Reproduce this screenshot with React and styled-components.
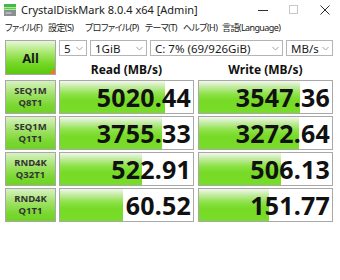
import React from 'react'
import styled, { createGlobalStyle } from 'styled-components'

const GlobalStyle = createGlobalStyle`
    html, body {
        margin: 0;
        padding: 0;
        background: #ffffff;
    }
    body {
        font-family: "Noto Sans", "Noto Sans CJK JP", sans-serif;
        color: #1a1a1a;
    }
`

const Window = styled.div`
    width: 340px;
    height: 280px;
    background: #ffffff;
    overflow: hidden;
`

const TitleBar = styled.div`
    height: 19px;
    display: flex;
    align-items: center;
    padding-left: 4px;
    font-size: 11px;
    color: #202020;
`

const TitleText = styled.span`
    margin-left: 5px;
    flex: 1;
    white-space: nowrap;
`

const WinButton = styled.div`
    width: 31px;
    height: 19px;
    display: flex;
    align-items: center;
    justify-content: center;
`

const MenuBar = styled.div`
    height: 16px;
    display: flex;
    align-items: center;
    padding-left: 5px;
    font-size: 9px;
    color: #1a1a1a;
    white-space: nowrap;
    font-family: "Noto Sans", "Noto Sans CJK JP", sans-serif;
    font-feature-settings: "palt" 1;
`

const MenuItem = styled.span`
    width: ${(p) => p.w}px;
    flex-shrink: 0;
    white-space: nowrap;
    letter-spacing: -0.6px;
`

const Board = styled.div`
    display: grid;
    grid-template-columns: 51px 135px 136px;
    grid-template-rows: 16px 20px repeat(4, 34px);
    column-gap: 3px;
    row-gap: 2px;
    padding: 5px 0 0 5px;
`

const AllButton = styled.div`
    grid-row: 1 / span 2;
    position: relative;
    border: 1px solid #a8a8a8;
    background: linear-gradient(to bottom, #e6f6d8 0%, #a8e86e 35%, #72d622 70%, #5cc810 100%);
    display: flex;
    align-items: center;
    justify-content: center;
    font-weight: 700;
    font-size: 13px;
    color: #1a1a1a;
    height: 33px;
`

const Corner = styled.div`
    position: absolute;
    right: 0;
    bottom: 0;
    width: 0;
    height: 0;
    border-left: 6px solid transparent;
    border-bottom: 6px solid #ee7a1c;
`

const Controls = styled.div`
    grid-column: 2 / span 2;
    display: flex;
    gap: 3px;
`

const Select = styled.div`
    width: ${(p) => p.w}px;
    height: 16px;
    box-sizing: border-box;
    border: 1px solid #b4b4b4;
    background: #ffffff;
    display: flex;
    align-items: center;
    justify-content: space-between;
    padding: 0 3px 0 4px;
    font-size: 11.5px;
    color: #1a1a1a;
    white-space: nowrap;
    overflow: hidden;
`

const Chevron = styled.svg`
    width: 7px;
    height: 5px;
    flex-shrink: 0;
`

const Header = styled.div`
    display: flex;
    align-items: center;
    justify-content: center;
    font-weight: 700;
    font-size: 12px;
    color: #111;
    padding-top: 3px;
    margin-left: ${(p) => (p.write ? '1px' : '0')};
`

const Label = styled.div`
    border: 1px solid #a8a8a8;
    box-sizing: border-box;
    background: linear-gradient(to bottom, #d8f2c2 0%, #a2e26a 40%, #7ad832 75%, #70d224 100%);
    display: flex;
    flex-direction: column;
    align-items: center;
    justify-content: center;
    font-weight: 700;
    font-size: 9.5px;
    line-height: 12px;
    color: #333;
`

const Cell = styled.div`
    position: relative;
    border: 1px solid #a8a8a8;
    box-sizing: border-box;
    background: #ffffff;
    margin-left: ${(p) => (p.write ? '1px' : '0')};
    display: flex;
    align-items: center;
    justify-content: flex-end;
    overflow: hidden;
`

const Bar = styled.div`
    position: absolute;
    left: 0;
    top: 0;
    bottom: 0;
    background: linear-gradient(to bottom, #f2f8ee 0%, #c4eca2 18%, #8ee24a 40%, #76da26 60%, #78dc2a 100%);
`

const Value = styled.span`
    position: relative;
    font-weight: 700;
    font-size: 25px;
    letter-spacing: 0.2px;
    color: #111;
    padding-right: 2px;
    line-height: 1;
`

const rows = [
    { a: 'SEQ1M', b: 'Q8T1', read: '5020.44', rp: 79, write: '3547.36', wp: 76 },
    { a: 'SEQ1M', b: 'Q1T1', read: '3755.33', rp: 77, write: '3272.64', wp: 75 },
    { a: 'RND4K', b: 'Q32T1', read: '522.91', rp: 62, write: '506.13', wp: 62 },
    { a: 'RND4K', b: 'Q1T1', read: '60.52', rp: 47, write: '151.77', wp: 53 },
]

const menus = [
    ['ファイル(F)', 43],
    ['設定(S)', 37],
    ['プロファイル(P)', 60],
    ['テーマ(T)', 38],
    ['ヘルプ(H)', 39],
    ['言語(Language)', 70],
]

const ChevronIcon = () => (
    <Chevron viewBox="0 0 7 5">
        <path d="M0.5 1 L3.5 4 L6.5 1" fill="none" stroke="#9a9a9a" strokeWidth="0.9" />
    </Chevron>
)

const AppIcon = () => (
    <svg width="12" height="12" viewBox="0 0 12 12">
        <rect x="0" y="0" width="12" height="3" fill="#3fb950" />
        <rect x="0" y="3.5" width="12" height="2" fill="#5ccf3a" />
        <rect x="0" y="6" width="12" height="6" fill="#8a8f96" />
        <rect x="1.5" y="8.5" width="6" height="1" fill="#e0e0e0" />
    </svg>
)

export default function App() {
    return (
        <Window>
            <GlobalStyle />
            <TitleBar>
                <AppIcon />
                <TitleText>CrystalDiskMark 8.0.4 x64 [Admin]</TitleText>
                <WinButton>
                    <svg width="10" height="10" viewBox="0 0 10 10">
                        <path d="M0 5.5 H10" stroke="#303030" strokeWidth="1" />
                    </svg>
                </WinButton>
                <WinButton>
                    <svg width="9" height="9" viewBox="0 0 9 9">
                        <rect x="0.5" y="0.5" width="8" height="8" fill="none" stroke="#c8c8c8" strokeWidth="1" />
                    </svg>
                </WinButton>
                <WinButton>
                    <svg width="10" height="10" viewBox="0 0 10 10">
                        <path d="M0.5 0.5 L9.5 9.5 M9.5 0.5 L0.5 9.5" stroke="#303030" strokeWidth="1" />
                    </svg>
                </WinButton>
            </TitleBar>
            <MenuBar>
                {menus.map(([t, w]) => (
                    <MenuItem key={t} w={w}>{t}</MenuItem>
                ))}
            </MenuBar>
            <Board>
                <AllButton>
                    All
                    <Corner />
                </AllButton>
                <Controls>
                    <Select w={28}>5<ChevronIcon /></Select>
                    <Select w={57}>1GiB<ChevronIcon /></Select>
                    <Select w={133}>C: 7% (69/926GiB)<ChevronIcon /></Select>
                    <Select w={47}>MB/s<ChevronIcon /></Select>
                </Controls>
                <Header>Read (MB/s)</Header>
                <Header write>Write (MB/s)</Header>
                {rows.map((r, i) => (
                    <React.Fragment key={i}>
                        <Label>
                            <span>{r.a}</span>
                            <span>{r.b}</span>
                        </Label>
                        <Cell>
                            <Bar style={{ width: `${r.rp}%` }} />
                            <Value>{r.read}</Value>
                        </Cell>
                        <Cell write>
                            <Bar style={{ width: `${r.wp}%` }} />
                            <Value>{r.write}</Value>
                        </Cell>
                    </React.Fragment>
                ))}
            </Board>
        </Window>
    )
}
